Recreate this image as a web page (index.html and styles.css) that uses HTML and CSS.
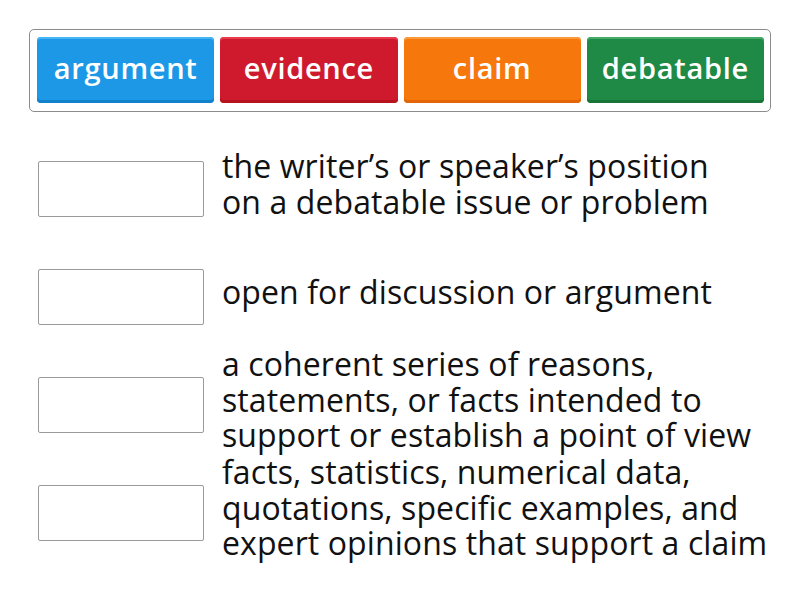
FILE: index.html
```html
<!DOCTYPE html>
<html>
<head>
<meta charset="utf-8">
<link rel="stylesheet" href="styles.css">
</head>
<body>
<div class="bank">
  <div class="tile blue">argument</div>
  <div class="tile red">evidence</div>
  <div class="tile orange">claim</div>
  <div class="tile green">debatable</div>
</div>
<div class="rows">
  <div class="row"><div class="slot"></div><div class="desc">the writer’s or speaker’s position<br>on a debatable issue or problem</div></div>
  <div class="row"><div class="slot"></div><div class="desc">open for discussion or argument</div></div>
  <div class="row"><div class="slot"></div><div class="desc">a coherent series of reasons,<br>statements, or facts intended to<br>support or establish a point of view</div></div>
  <div class="row"><div class="slot"></div><div class="desc">facts, statistics, numerical data,<br>quotations, specific examples, and<br>expert opinions that support a claim</div></div>
</div>
</body>
</html>
```
FILE: styles.css
```css
html, body {
  margin: 0;
  padding: 0;
  background: #fff;
}
body {
  width: 800px;
  height: 600px;
  overflow: hidden;
  font-family: "Open Sans", Lato, sans-serif;
}
.bank {
  box-sizing: border-box;
  margin: 29px 0 0 29px;
  width: 742px;
  height: 83px;
  border: 1px solid #8c8c8c;
  border-radius: 5px;
  padding: 7px 6px 7px 7px;
  display: flex;
  gap: 6px;
}
.tile {
  flex: 1;
  height: 66px;
  border-radius: 4px;
  color: #fff;
  font-size: 29px;
  font-weight: 600;
  letter-spacing: 0.7px;
  display: flex;
  align-items: center;
  justify-content: center;
  padding-bottom: 5px;
  box-sizing: border-box;
}
.blue { background: #1c98e6; box-shadow: inset 0 2px 0 #45b4f7, inset 0 -3px 0 #1281cc; }
.red { background: #cf1a2e; box-shadow: inset 0 2px 0 #ea3c4f, inset 0 -3px 0 #b8121f; }
.orange { background: #f6770b; box-shadow: inset 0 2px 0 #fb9a38, inset 0 -3px 0 #e46505; }
.green { background: #1f8a45; box-shadow: inset 0 2px 0 #45ac68, inset 0 -3px 0 #187537; }
.rows {
  margin-top: 23px;
}
.row {
  height: 108px;
  display: flex;
  align-items: center;
  padding-left: 38px;
  gap: 18px;
}
.slot {
  flex: none;
  box-sizing: border-box;
  width: 166px;
  height: 56px;
  border: 1px solid #9a9a9a;
  border-radius: 2px;
}
.desc {
  font-size: 32px;
  line-height: 35.5px;
  letter-spacing: 0.1px;
  color: #111;
  white-space: nowrap;
  padding-bottom: 11px;
}
```
